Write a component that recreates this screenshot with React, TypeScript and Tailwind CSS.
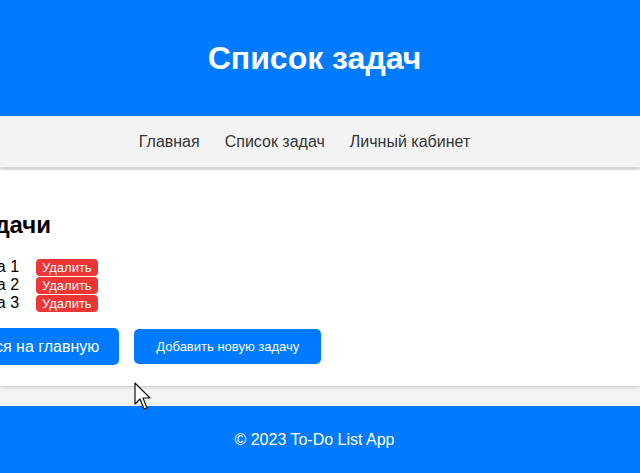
import React from 'react'

const tasks = ['Задача 1', 'Задача 2', 'Задача 3']

function Cursor() {
  return (
    <svg className="absolute left-[134px] top-[382px]" width="22" height="30" viewBox="0 0 22 30" aria-hidden="true">
      <path d="M1 1 L1 22 L6 17 L10 27 L13 26 L9 16 L16 16 Z" fill="#fff" stroke="#111" strokeWidth="1.2" strokeLinejoin="round" />
    </svg>
  )
}

export default function App() {
  return (
    <div className="relative min-h-screen bg-[#f4f4f4] font-['Liberation_Sans',Arial,sans-serif] overflow-hidden">
      {/* Header */}
      <header className="h-[116px] bg-[#007bff] flex items-center justify-center pr-[11px]">
        <h1 className="text-[32px] font-bold text-white">Список задач</h1>
      </header>

      {/* Nav */}
      <nav className="h-[51px] bg-[#f3f3f3] shadow-[0_2px_3px_rgba(0,0,0,0.15)] flex items-center justify-center pr-[6px] relative z-10">
        {['Главная', 'Список задач', 'Личный кабинет'].map((item) => (
          <a key={item} className="text-[16px] text-[#333] mr-[25px]">{item}</a>
        ))}
      </nav>

      {/* Card */}
      <main className="mt-[3px] h-[216px] bg-white shadow-[0_1px_4px_rgba(0,0,0,0.2)]">
        <div className="ml-[-34px] pt-[41px]">
          <h2 className="text-[24px] font-bold text-black leading-[28px]">Задачи</h2>
          <ul className="mt-[19px] ml-[-14px]">
            {tasks.map((t) => (
              <li key={t} className="flex items-center h-[18px] text-[16px] text-black">
                <span className="w-[84px]">{t}</span>
                <button className="bg-[#ee3535] text-white text-[13px] leading-[17px] px-[6px] rounded-[4px]">Удалить</button>
              </li>
            ))}
          </ul>
          <div className="mt-[16px] ml-[-52px] flex items-center gap-[15px]">
            <button className="bg-[#007bff] text-white text-[16px] h-[37px] px-[20px] rounded-[5px]">Вернуться на главную</button>
            <button className="bg-[#007bff] text-white text-[13px] h-[35px] px-[22px] rounded-[5px]">Добавить новую задачу</button>
          </div>
        </div>
      </main>

      {/* Footer */}
      <footer className="mt-[20px] h-[67px] bg-[#007bff] flex items-center justify-center pr-[11px]">
        <p className="text-[16px] text-white">© 2023 To-Do List App</p>
      </footer>

      <Cursor />
    </div>
  )
}
